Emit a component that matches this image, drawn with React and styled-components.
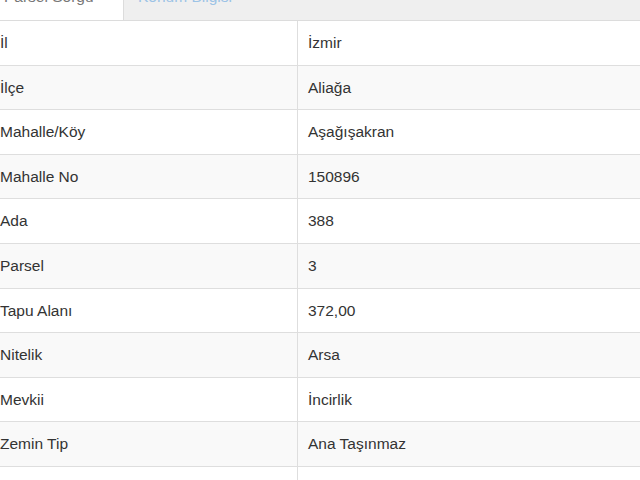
import styled, { createGlobalStyle } from 'styled-components';

const GlobalStyle = createGlobalStyle`
  html, body {
    margin: 0;
    padding: 0;
    background: #fff;
    overflow: hidden;
  }
  body {
    font-family: "Liberation Sans", Arial, sans-serif;
    color: #333;
  }
`;

// sekme kısmı
const Wrapper = styled.div`
  margin-left: -10px;
  width: 700px;
`;

const Tabs = styled.ul`
  display: flex;
  margin: -20px 0 0 0;
  padding: 0;
  list-style: none;
  background-color: #efefef;
  border-bottom: 1px solid #dcdcdc;
`;

const Tab = styled.li`
  box-sizing: border-box;
  height: 40px;
  padding: 7px 14px 0 14px;
  font-size: 15.5px;
  line-height: 20px;
  white-space: nowrap;
  color: ${(props) => (props.active ? '#777' : '#9cc3e6')};
  background-color: ${(props) => (props.active ? '#fff' : 'transparent')};
  border-right: ${(props) => (props.active ? '1px solid #dcdcdc' : 'none')};
  width: ${(props) => props.width || 'auto'};
`;

// tablo kısmı
const Table = styled.table`
  width: 100%;
  border-collapse: collapse;
  table-layout: fixed;
  font-size: 15.5px;
`;

const Row = styled.tr`
  background-color: ${(props) => (props.striped ? '#f9f9f9' : '#fff')};
  &:first-child td {
    border-top: none;
  }
`;

const Cell = styled.td`
  padding: 12px 10px;
  line-height: 19.6px;
  border-top: 1px solid #dedede;
  border-left: 1px solid #dedede;
  vertical-align: top;
  white-space: nowrap;
  &:first-child {
    width: 287px;
    border-left: none;
  }
`;

const rows = [
  ['İl', 'İzmir'],
  ['İlçe', 'Aliağa'],
  ['Mahalle/Köy', 'Aşağışakran'],
  ['Mahalle No', '150896'],
  ['Ada', '388'],
  ['Parsel', '3'],
  ['Tapu Alanı', '372,00'],
  ['Nitelik', 'Arsa'],
  ['Mevkii', 'İncirlik'],
  ['Zemin Tip', 'Ana Taşınmaz'],
  ['Pafta', '-'],
];

const App = () => {
  return (
    <>
      <GlobalStyle />
      <Wrapper>
        <Tabs>
          <Tab active width="134px">Parsel Sorgu</Tab>
          <Tab>Konum Bilgisi</Tab>
        </Tabs>
        <Table>
          <tbody>
            {rows.map(([label, value], i) => (
              <Row key={label} striped={i % 2 === 1}>
                <Cell>{label}</Cell>
                <Cell>{value}</Cell>
              </Row>
            ))}
          </tbody>
        </Table>
      </Wrapper>
    </>
  );
};

export default App;
